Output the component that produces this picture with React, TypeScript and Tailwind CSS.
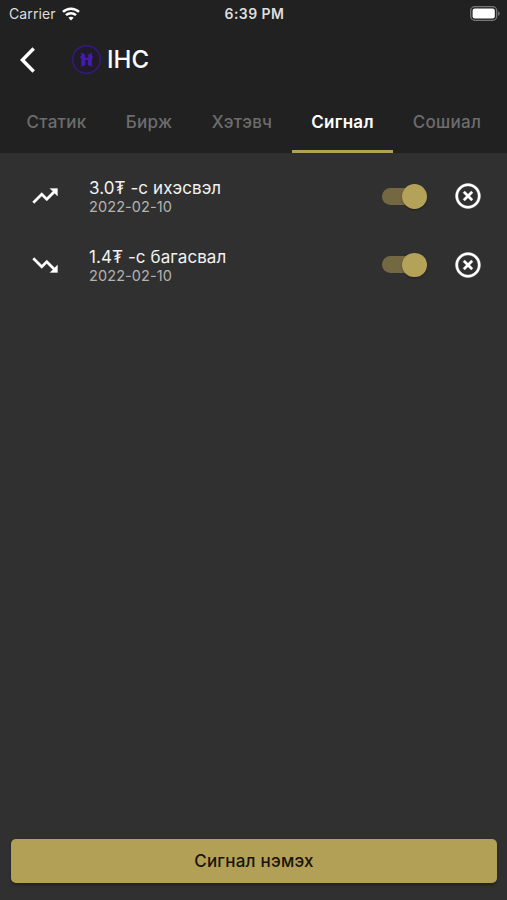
import type { ReactNode } from "react";
import clsx from "clsx";

type Signal = {
  id: number;
  direction: "up" | "down";
  title: string;
  date: string;
};

const tabs = [
  { label: "Статик", width: "w-[99px]" },
  { label: "Бирж", width: "w-[86px]" },
  { label: "Хэтэвч", width: "w-[100px]" },
  { label: "Сигнал", width: "w-[101px]", active: true },
  { label: "Сошиал", width: "w-[108px]" },
];

const signals: Signal[] = [
  { id: 1, direction: "up", title: "3.0₮ -с ихэсвэл", date: "2022-02-10" },
  { id: 2, direction: "down", title: "1.4₮ -с багасвал", date: "2022-02-10" },
];

const trendPaths = {
  up: "M16 6l2.29 2.29-4.88 4.88-4-4L2 16.59 3.41 18l6-6 4 4 6.3-6.29L22 12V6z",
  down: "M16 18l2.29-2.29-4.88-4.88-4 4L2 7.41 3.41 6l6 6 4-4 6.3 6.29L22 12v6z",
};

function Icon({ children }: { children: ReactNode }) {
  return (
    <svg
      viewBox="0 0 24 24"
      className="size-[30px]"
      fill="currentColor"
      stroke="currentColor"
      strokeWidth="0.25"
      aria-hidden="true"
    >
      {children}
    </svg>
  );
}

function StatusBar() {
  return (
    <div className="grid h-[27px] grid-cols-3 items-center pr-[7px] pl-[9px] text-[14px] text-[#dedede]">
      <div className="flex items-center gap-[6px]">
        <span className="tracking-[0.1px]">Carrier</span>
        <svg viewBox="0 0 18 14" className="h-[14px] w-[18px]" fill="none" stroke="#fff" strokeWidth="2.5">
          <path d="M1 4.9C5.4.6 12.6.6 17 4.9" />
          <path d="M4 8.2c2.8-2.7 7.2-2.7 10 0" />
          <path d="M6.4 10.7c1.5-1.4 3.7-1.4 5.2 0L9 13.5z" fill="#fff" stroke="none" />
        </svg>
      </div>
      <span className="text-center font-semibold tracking-[0.45px]">6:39 PM</span>
      <svg viewBox="0 0 30 15" className="h-[15px] w-[30px] justify-self-end">
        <rect x=".7" y=".7" width="26" height="13.6" rx="4" fill="#222" stroke="#777" strokeWidth="1.3" />
        <rect x="2.6" y="2.6" width="22.2" height="9.8" rx="2.2" fill="#fff" />
        <path d="M28.2 5.2c2 .8 2 3.8 0 4.6z" fill="#777" />
      </svg>
    </div>
  );
}

function Header() {
  return (
    <div className="flex h-[65px] items-center pl-[20px]">
      <svg viewBox="0 0 15 26" className="h-[26px] w-[15px]" fill="none" stroke="#fff" strokeWidth="3.4">
        <path d="M13.7 1.5 2.4 13l11.3 11.5" />
      </svg>
      <svg viewBox="0 0 30 30" className="ml-[37px] size-[30px]">
        <circle cx="14.5" cy="14.5" r="13.8" fill="#201b29" stroke="#36197f" strokeWidth="1.6" />
        <path
          d="M9.3 7.5 13 9.6v3.2h3.2V9.6l3.7-2.1v3.3l1.4 1.4-1.4 1.5v8l-4-1.7v-4.3c-.4-1.2-2.2-1.2-2.6 0V20l-4 1.7v-8l-1.7-1.5 1.7-1.4z"
          fill="#431cab"
        />
      </svg>
      <h1 className="ml-[5px] text-[24px] leading-none font-medium">IHC</h1>
    </div>
  );
}

function TabBar() {
  return (
    <nav className="flex h-[61px] justify-center text-[17px] leading-6 font-medium">
      {tabs.map((tab) => (
        <button
          key={tab.label}
          className={clsx(
            "flex shrink-0 justify-center border-b-[3px] pt-[18px] pl-px tracking-[0.25px]",
            tab.width,
            tab.active ? "border-[#b3a057] font-semibold text-white" : "border-transparent text-[#6d6d6d]",
          )}
        >
          {tab.label}
        </button>
      ))}
    </nav>
  );
}

function Toggle() {
  return (
    <button role="switch" aria-checked="true" className="flex h-[25px] w-[45px] items-center">
      <span className="flex h-[17px] w-[42px] items-center rounded-full bg-[#746842]">
        <span className="ml-[20px] size-[24.5px] shrink-0 rounded-full bg-[#b5a259] shadow-[0_1px_2px_rgba(0,0,0,0.35)]" />
      </span>
    </button>
  );
}

function SignalRow({ signal }: { signal: Signal }) {
  return (
    <li className="flex h-[68.5px] items-center pr-[24px] pl-[30px]">
      <Icon>
        <path d={trendPaths[signal.direction]} />
      </Icon>
      <div className="ml-[29px] flex-1">
        <p className="h-[22px] text-[17px] leading-6 tracking-[0.08px] text-[#f2f2f2]">{signal.title}</p>
        <p className="text-[14.5px] leading-[18px] tracking-[0.1px] text-[#b3b3b3]">{signal.date}</p>
      </div>
      <Toggle />
      <button aria-label="Устгах" className="ml-[26px]">
        <Icon>
          <path d="M14.59 8 12 10.59 9.41 8 8 9.41 10.59 12 8 14.59 9.41 16 12 13.41 14.59 16 16 14.59 13.41 12 16 9.41 14.59 8zM12 2C6.47 2 2 6.47 2 12s4.47 10 10 10 10-4.47 10-10S17.53 2 12 2zm0 18c-4.41 0-8-3.59-8-8s3.59-8 8-8 8 3.59 8 8-3.59 8-8 8z" />
        </Icon>
      </button>
    </li>
  );
}

export default function App() {
  return (
    <div className="flex h-screen flex-col overflow-hidden bg-[#303030] font-[Inter,sans-serif] text-white">
      <header className="h-[153px] shrink-0 bg-[#212121]">
        <StatusBar />
        <Header />
        <TabBar />
      </header>
      <ul className="flex-1 pt-[9px]">
        {signals.map((signal) => (
          <SignalRow key={signal.id} signal={signal} />
        ))}
      </ul>
      <div className="pr-[10px] pb-[17px] pl-[11px]">
        <button className="flex h-[44px] w-full items-center justify-center rounded-[5px] bg-[#b3a057] pt-px text-[17px] font-medium tracking-[0.22px] text-[#191308] shadow-[0_2px_3px_rgba(0,0,0,0.3)]">
          Сигнал нэмэх
        </button>
      </div>
    </div>
  );
}
